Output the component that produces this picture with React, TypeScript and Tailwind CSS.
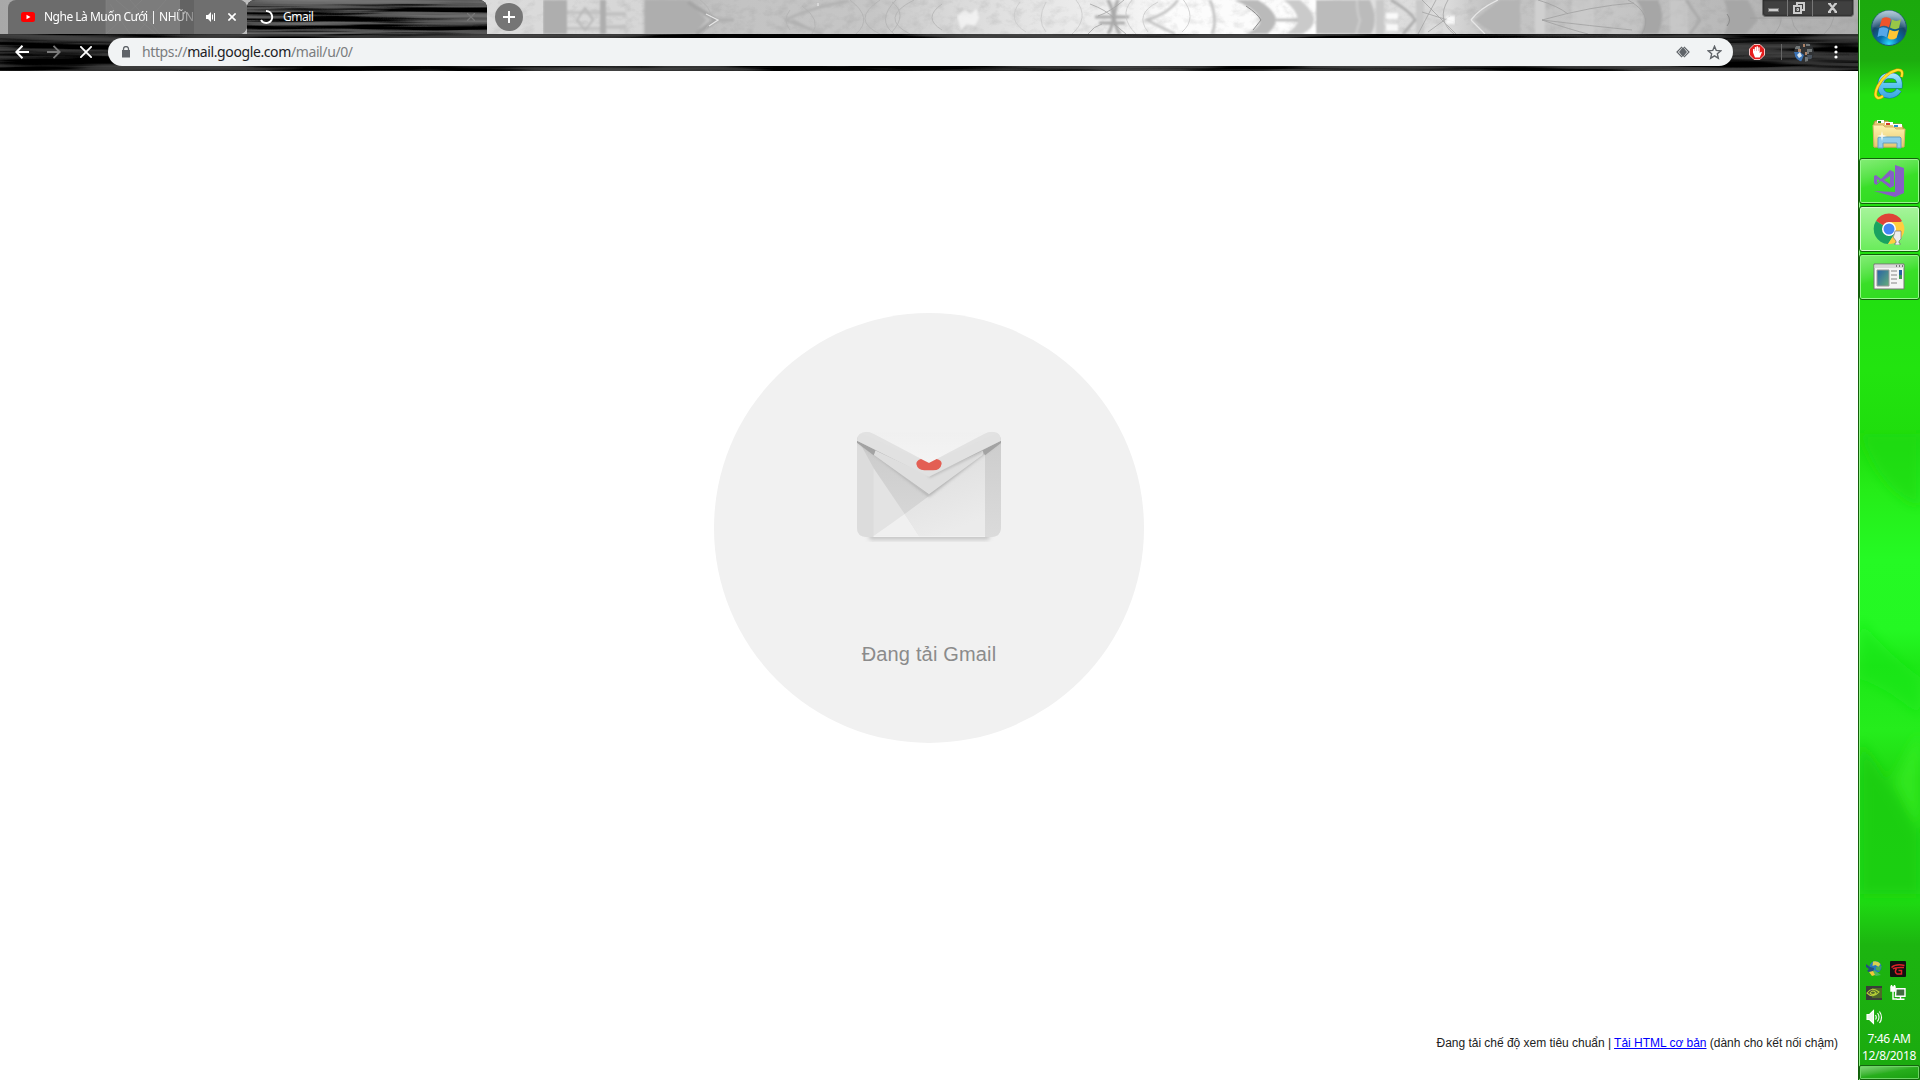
import React from "react";

function Forest() {
  return (
    <svg className="absolute inset-0" width="1858" height="34" viewBox="0 0 1858 34" fill="none">
      <defs>
        <linearGradient id="sky" x1="0" x2="1858" y1="0" y2="0" gradientUnits="userSpaceOnUse">
          <stop offset="0" stopColor="#a8a8a8" />
          <stop offset=".24" stopColor="#d0d0d0" />
          <stop offset=".262" stopColor="#dcdcdc" />
          <stop offset=".345" stopColor="#d6d6d6" />
          <stop offset=".348" stopColor="#bcbcbc" />
          <stop offset=".40" stopColor="#c3c3c3" />
          <stop offset=".47" stopColor="#c6c6c6" />
          <stop offset=".51" stopColor="#d8d8d8" />
          <stop offset=".56" stopColor="#e6e6e6" />
          <stop offset=".61" stopColor="#f2f2f2" />
          <stop offset=".63" stopColor="#fcfcfc" />
          <stop offset=".71" stopColor="#fcfcfc" />
          <stop offset=".74" stopColor="#dedede" />
          <stop offset=".78" stopColor="#dadada" />
          <stop offset=".80" stopColor="#c2c2c2" />
          <stop offset=".87" stopColor="#c6c6c6" />
          <stop offset=".92" stopColor="#bababa" />
          <stop offset="1" stopColor="#adadad" />
        </linearGradient>
        <filter id="grain" x="0" y="0" width="100%" height="100%" colorInterpolationFilters="sRGB">
          <feTurbulence type="fractalNoise" baseFrequency=".09 .12" numOctaves="4" seed="8" />
          <feColorMatrix values="0 0 0 0 .5  0 0 0 0 .5  0 0 0 0 .5  1.6 0 0 0 -.7" />
        </filter>
        <filter id="haze" x="0" y="-20%" width="100%" height="140%"><feGaussianBlur stdDeviation=".8" /></filter>
      </defs>
      <rect width="1858" height="34" fill="url(#sky)" />
      <rect x="487" width="1371" height="34" filter="url(#grain)" opacity=".25" />
      <g filter="url(#haze)">
        <path d="M543 0h24v34h-24zM600 0h6v34h-6zM645 0h43l18 20-12 14h-49z" fill="#aeaeae" />
        <path d="M567 11h33v3h-33zM567 27h33v3h-33zM606 12h20v4h-20zM606 25h20v4h-20z" fill="#c2c2c2" />
        <path d="M1234 0h24q17 10 18 20-1 8-9 14h-20q14-8 13-14-2-10-26-20z" fill="#bababa" />
        <path d="M1284 0h16q14 12 14 20t-12 14h-16q12-8 12-14-1-10-14-20z" fill="#cacaca" />
        <path d="M1316 0h54q9 20 1 34h-55z" fill="#bbbbbb" />
        <path d="M1376 0h8v34h-8zM1416 0h8v34h-8z" fill="#c8c8c8" />
        <path d="M1500 0h20v34h-26l-20-14z" fill="#b4b4b4" />
        <path d="M1535 0h10v34h-10z" fill="#d0d0d0" />
        <path d="M1636 0q14 18 4 34h18q8-18 0-34zM1724 0q8 20 0 34h22l12-14-10-20z" fill="#a6a6a6" />
        <path d="M1572 0h22v34h-22zM1670 0h18v34h-18z" fill="#cdcdcd" opacity=".55" />
        <path d="m577 20 8-12 8 12-8 10z" stroke="#b8b8b8" strokeWidth="2" />
        <path d="m688 2 28 18-20 14" stroke="#a4a4a4" strokeWidth="4" />
        <path d="m716 20 18 0" stroke="#aeaeae" strokeWidth="3" />
        <path d="m785 20q30-14 64-19m-64 19 38 14M792 20l28 14" stroke="#b1b1b1" strokeWidth="2.500" />
        <path d="M1095 17h34m-30 6h26M1108 0q10 18 0 34m10-34q-8 20 2 34" stroke="#a9a9a9" strokeWidth="3" />
        <path d="M1178 0q-10 14-31 20l28 14M1210 0q8 20 2 34" stroke="#c0c0c0" strokeWidth="2.500" />
        <path d="M1276 20h22" stroke="#b8b8b8" strokeWidth="2.500" />
        <path d="M1391 0q20 12 24 20l-12 14M1686 0l14 20-10 14" stroke="#a9a9a9" strokeWidth="2.500" />
        <path d="M1357 0q0 14 3 20l-4 14" stroke="#cecece" strokeWidth="2" />
      </g>
      <g strokeWidth=".8">
        <path d="M700 0q20 14 2 34M790 10q-8 10 0 20m12-24q20 14 10 28M850 0q24 18 6 34m24-34q-30 20 0 34m16-34q-20 20-2 34m20-34q-36 18-4 34m32-30q-20 14 0 26m-50-28q16 12 0 30" stroke="#b3b3b3" />
        <path d="M1020 2q-14 18 6 30m20-30q-10 18 0 30m30-32q14 18-4 34m60-34q-14 16 4 34m22-32q-24 12-10 30m34-34q16 20 0 34" stroke="#c9c9c9" />
        <path d="M1090 4q16 6 24 14m10-18q-14 12-26 16m4 8q-8 2-14 10m26-10 12 10M1422 0l34 34m-20-34-18 34m30-34q-12 20 6 34m-32-22 32 10m-26 10 22-16" stroke="#a4a4a4" />
        <path d="M1542 20q50-14 92-17m-92 17q50 6 90 10m-90-10q30 10 46 14m-50-34q20 6 30 14m60-14q26 14 14 34" stroke="#a0a0a0" />
        <path d="M1770 0q20 16 4 34m24-34q-14 18 2 34m30-34q10 20-6 34m-74-16 80 0" stroke="#a0a0a0" />
      </g>
      <path d="m818 3v3M706 14l12 6-9 6M1471 20q8-11 27-20m-27 20 14 14" stroke="#e6e6e6" strokeWidth="1.300" />
      <g fill="#fff" filter="url(#haze)">
        <path d="m957 16 8-6 6 4 6-6 2 10-4 8-8-2-6 6z" opacity=".6" />
        <path d="M1279 2l9 14h-9zM1279 34v-10h9zM1308 0h7v10zM1308 34h7v-8zM1386 13h12v6h-12zM1386 24h12v7h-12zM1446 16h9v8h-9z" opacity=".85" />
      </g>
      <path d="m1246 6q12 8 15 14l-8 10M1727 14q5 6 0 12" stroke="#8a8a8a" strokeWidth="1" />
    </svg>
  );
}

function Wood({ id, seed }: { id: string; seed: number }) {
  return (
    <svg className="absolute inset-0 h-full w-full">
      <filter id={id} x="0" y="0" width="100%" height="100%" colorInterpolationFilters="sRGB">
        <feTurbulence type="fractalNoise" baseFrequency=".0055 .16" numOctaves="3" seed={seed} />
        <feColorMatrix values="1.500 0 0 0 -.55  1.500 0 0 0 -.55  1.500 0 0 0 -.55  0 0 0 0 1" />
        <feComponentTransfer>
          <feFuncR type="table" tableValues="0 .32 .42 .46 .5" />
          <feFuncG type="table" tableValues="0 .32 .42 .46 .5" />
          <feFuncB type="table" tableValues="0 .32 .42 .46 .5" />
        </feComponentTransfer>
      </filter>
      <rect width="100%" height="100%" filter={`url(#${id})`} />
    </svg>
  );
}

function TabStrip() {
  return (
    <div className="relative h-[34px] w-full overflow-hidden">
      <Forest />
      <div className="relative flex h-full items-start pl-2 text-[12px] text-white">
        <div className="relative flex h-[34px] w-[239px] items-center overflow-hidden rounded-[8px] rounded-bl-none bg-[#6c6c6c]">
          <svg className="absolute inset-0" width="239" height="34" fill="none">
            <path d="M98 0h74v34H98z" fill="#7c7c7c" />
            <path d="M172 0h14v34h-14z" fill="#636363" />
            <path d="M186 0h53v34h-53z" fill="#6f6f6f" />
            <path d="M98 0v34M102 4l20 30m-14-34 40 34m-50 0 36-34m-12 0 30 34m-24 0 30-34" stroke="#858585" opacity=".6" />
          </svg>
          <svg className="relative ml-[13px]" width="14" height="10"><rect width="14" height="10" rx="2.5" fill="#f00" /><path d="m5.500 2.800 4 2.200-4 2.200z" fill="#fff" /></svg>
          <span className="relative ml-[9px] w-[152px] whitespace-nowrap tracking-[-0.5px] [mask-image:linear-gradient(to_right,#000_84%,rgba(0,0,0,.2))]">Nghe Là Muốn Cưới | NHỮN</span>
          <svg className="relative ml-[10px]" width="10" height="10" fill="#fff"><path d="M0 3h2l3-3v10L2 7H0z" /><path d="M6.500 2.500v5M8.500 1v8" stroke="#fff" strokeWidth="1" /></svg>
          <svg className="relative ml-[12px]" width="8" height="8" stroke="#fff" strokeWidth="1.6"><path d="m.4.4 7.2 7.200M7.600.4.4 7.600" /></svg>
        </div>
        <div className="relative flex h-[34px] w-[240px] items-center overflow-hidden rounded-[8px] rounded-b-none bg-black">
          <Wood id="tab-wood" seed={5} />
          <svg className="relative ml-[13px]" width="14" height="16" fill="none" stroke="#fff" strokeWidth="2"><path d="M6 2A6 6 0 1 1 1 11" /></svg>
          <span className="relative ml-[9px] tracking-[-0.5px]">Gmail</span>
          <svg className="absolute right-[12px] top-[13px]" width="8" height="8" stroke="#777" strokeWidth="1.300"><path d="m0 0 8 8M8 0 0 8" /></svg>
        </div>
        <div className="ml-[8px] mt-[3px] flex size-7 items-center justify-center rounded-full bg-[#757575]">
          <svg width="12" height="12" stroke="#fff" strokeWidth="2"><path d="M6 0v12M0 6h12" /></svg>
        </div>
        <div className="ml-auto mr-1 flex h-[17px] w-[92px] rounded-b-[4px] border border-t-0 border-[#6d6d6d] bg-[#404040] shadow-[inset_0_0_2px_#111]">
          <div className="flex w-[25px] items-center justify-center border-r border-[#777]"><svg className="-ml-0.5" width="12" height="16"><rect x=".5" y="8.500" width="10" height="3" fill="#ccc" stroke="#777" /></svg></div>
          <div className="flex w-[25px] items-center justify-center border-r border-[#777]"><svg className="-ml-0.5" width="12" height="14" fill="none" stroke="#ccc" strokeWidth="2"><path d="M4 4V2h7v7H9M1 5h7v7H1z" /><path d="M4 7.500h1.500v2H4z" strokeWidth="1" /></svg></div>
          <div className="flex flex-1 items-center justify-center"><svg width="10" height="10" stroke="#ccc" strokeWidth="2.200"><path d="m1 0 7 9M8 0 1 9M0 .5h3M6.500.5H9M0 9h3m3.500 0H9" /></svg></div>
        </div>
      </div>
    </div>
  );
}

function Toolbar() {
  return (
    <div className="relative h-[37px] w-full overflow-hidden bg-black">
      <Wood id="bar-wood" seed={12} />
      <div className="absolute inset-0 bg-black/40" />
      <div className="relative flex h-9 items-center">
        <svg className="ml-[15px]" width="14" height="14" fill="none" stroke="#fff" strokeWidth="2"><path d="M14 7H1.500M7.500.800 1.300 7l6.200 6.200" /></svg>
        <svg className="ml-[18px]" width="14" height="14" fill="none" stroke="#7a7a7a" strokeWidth="1.800"><path d="M0 7h12.500M6.500.800 12.700 7l-6.200 6.200" /></svg>
        <svg className="ml-[19px]" width="12" height="12" stroke="#fff" strokeWidth="1.800"><path d="m.3.3 11.400 11.400M11.700.3.3 11.700" /></svg>
        <div className="ml-[16px] flex h-7 w-[1625px] items-center rounded-full bg-[#f1f3f4]">
          <svg className="ml-[14px]" width="8" height="12" fill="#5f6368"><path d="M0 4h8v7.500H0z" /><path d="M1.500 5V3a2.500 2.500 0 0 1 5 0v2" fill="none" stroke="#5f6368" strokeWidth="1.300" /></svg>
          <span className="mb-px ml-[12px] whitespace-nowrap text-[14px] tracking-[-0.39px] text-[#7a7c7e]">https://<span className="text-[#202124]">mail.google.com</span>/mail/u/0/</span>
          <svg className="ml-auto" width="14" height="12" fill="none" stroke="#5f6368" strokeWidth="1.200"><path d="M6 .8 1 6l5 5.200M8 .8 13 6l-5 5.200" /><path d="m7 1 4 5-4 5-4-5z" fill="#5f6368" stroke="none" /></svg>
          <svg className="ml-[17px] mr-[11px]" width="15" height="15" viewBox="0 0 15 15" fill="none" stroke="#5f6368" strokeWidth="1.400"><path d="m7.500 1.300 1.750 4.150 4.500.4-3.400 2.950 1 4.400-3.850-2.350-3.850 2.350 1-4.400-3.400-2.950 4.500-.4z" /></svg>
        </div>
        <svg className="ml-[16px]" width="16" height="16" viewBox="0 0 16 16"><path d="M5 .5h6L15.500 5v6L11 15.500H5L.5 11V5z" fill="#e51c1c" stroke="#f7c3c3" /><path d="M4 8.500V5.200q.8-.7 1.500 0V7h.3V3.300q.7-.6 1.400 0V7h.3V2.500q.8-.6 1.500 0V7h.3V3.500q.7-.6 1.400 0V9l1-1q1-.5 1.200.3L10.800 13.500H6z" fill="#fff" /></svg>
        <div className="ml-[16px] h-4 w-px bg-[#656565]" />
        <svg className="ml-[12px]" width="20" height="20" viewBox="0 0 20 20"><defs><clipPath id="face"><circle cx="10" cy="10" r="10" /></clipPath></defs><g clipPath="url(#face)"><path d="M0 0h20v20H0z" fill="#303234" /><path d="M1 4h5v3H1zM13 7h5v3h-3v2h-2zM11 15h3v5h-3zM12 2h4v2h-4z" fill="#727778" /><path d="M0 10h6l4 3-3 7H2z" fill="#3d73b4" /><path d="M4 7h3v3H4zM9 2h2v3H9zM11 10h2v3h-2z" fill="#ad8368" /><path d="m3 13 3-3 2 4-3 2z" fill="#dce8ee" /><path d="M13 13h5v4h-4z" fill="#4b545f" /></g></svg>
        <svg className="ml-[20px]" width="4" height="14" fill="#fff"><circle cx="2" cy="2" r="1.600" /><circle cx="2" cy="7" r="1.600" /><circle cx="2" cy="12" r="1.600" /></svg>
      </div>
    </div>
  );
}

function Envelope() {
  return (
    <svg className="ml-px shrink-0" width="180" height="150" viewBox="0 0 540 450">
      <defs>
        <linearGradient id="left-fold" x2="0" y2="1"><stop stopColor="#cbcbcb" /><stop offset="1" stopColor="#d6d6d6" /></linearGradient>
        <linearGradient id="front" x1="0" y1="0" x2=".4" y2="1"><stop stopColor="#dcdcdc" /><stop offset="1" stopColor="#ebebeb" /></linearGradient>
        <linearGradient id="side" x2="0" y2="1"><stop stopColor="#cdcdcd" /><stop offset="1" stopColor="#dbdbdb" /></linearGradient>
        <linearGradient id="inner" x2="0" y2="1"><stop stopColor="#f0f0f0" /><stop offset="1" stopColor="#f4f4f4" /></linearGradient>
        <filter id="drop"><feGaussianBlur stdDeviation="7" /></filter>
        <filter id="edge"><feGaussianBlur stdDeviation="4" /></filter>
        <clipPath id="shell"><path d="M51 92Q52 66 80 65q8 0 22 7l165 87 165-87q14-8 27-7 23 2 24 27v262q-2 26-28 27H79q-27-1-28-27z" /></clipPath>
      </defs>
      <path d="M73 340h390l-18 50H90z" fill="#aaa" opacity=".6" filter="url(#drop)" />
      <path d="M95 67h345L267 160z" fill="url(#inner)" />
      <g clipPath="url(#shell)">
        <path d="M51 65h432v316H51z" fill="#e2e2e2" />
        <path d="M51 92l50 44v245H51z" fill="#dcdcdc" />
        <path d="M101 130v251l93-68z" fill="#e3e3e3" />
        <path d="m101 378 93-66 45 69H101z" fill="#f0f0f0" />
        <path d="m194 312 73-54 168-122v245H239z" fill="url(#front)" />
        <path d="m60 100 41 75 93 137 73-54z" fill="url(#left-fold)" />
        <path d="m435 132 48-38v287h-48z" fill="url(#side)" />
        <path d="M51 94l216 166L483 94v-15L267 193 51 79z" fill="#999" filter="url(#edge)" opacity=".65" />
        <path d="m105 121 162 76 164-76-3 14-161 118-165-118z" fill="#dedede" />
        <path d="M267 200l160-78" stroke="#aaa" strokeWidth="6" fill="none" filter="url(#edge)" />
        <path d="m51 92 56 28-6 16-50-38zM483 92l-56 29 8 15 48-37z" fill="#a3a3a3" />
        <path d="M51 65v27l216 108L483 92V65L267 159z" fill="#e1e1e1" />
        <path d="M101 379h334" stroke="#f5f5f5" strokeWidth="2" />
      </g>
      <path d="m243 147 24 12 23-12q15 3 15 14-3 19-26 20h-26q-21-2-24-19 0-11 14-15z" fill="#e35f54" />
    </svg>
  );
}

function PageContent() {
  return (
    <main className="flex flex-1 flex-col items-center bg-white" style={{ fontFamily: '"Liberation Sans", Arial, sans-serif' }}>
      <div className="mt-[242px] flex size-[430px] shrink-0 flex-col items-center rounded-full bg-[#f1f1f1] pt-[97px]">
        <Envelope />
        <p className="mt-[79px] whitespace-nowrap text-[20px] leading-[30px] tracking-[0.17px] text-[#8b8b8b]">Đang tải Gmail</p>
      </div>
      <p className="mb-[28px] mr-[20px] mt-auto self-end whitespace-nowrap text-[12px] leading-[18px] tracking-[-0.025px] text-[#222]">
        Đang tải chế độ xem tiêu chuẩn | <a className="text-[#00f] underline">Tải HTML cơ bản</a> (dành cho kết nối chậm)
      </p>
    </main>
  );
}

function StartOrb() {
  return (
    <svg className="mt-[9px] shrink-0" width="38" height="38" viewBox="0 0 38 38">
      <defs><radialGradient id="orb" cx=".5" cy=".95" r=".8"><stop stopColor="#30d8ff" /><stop offset=".35" stopColor="#056fae" /><stop offset=".75" stopColor="#174565" /><stop offset="1" stopColor="#6a96ae" /></radialGradient><linearGradient id="gloss" x2="0" y2="1"><stop stopColor="#d3e0ea" /><stop offset="1" stopColor="#44708f" stopOpacity=".4" /></linearGradient></defs>
      <circle cx="19" cy="19" r="17.500" fill="url(#orb)" stroke="#205b70" />
      <path d="M2.500 18A16.500 16.500 0 0 1 35.500 18Q22 22 2.500 18z" fill="url(#gloss)" opacity=".75" />
      <path d="M12 9.500q5-2.500 9 .5l-2 8.500q-4-3-9.500-.5z" fill="#ed542b" /><path d="M22 10.500q5 3 9-.5l-2 9q-4 2.500-9-.5z" fill="#98c747" /><path d="M9 19.500q5-2.500 9.500.5l-2 8.500q-4-3-9-.5z" fill="#55a7e9" /><path d="M19.500 20.500q5 3 9.500.5l-2.500 8q-5 3-9 0z" fill="#ffc534" />
    </svg>
  );
}

function ExplorerE() {
  return (
    <svg className="mt-[21px] shrink-0" width="30" height="32" viewBox="0 0 30 32" fill="none">
      <defs><linearGradient id="ie" gradientUnits="userSpaceOnUse" x1="0" y1="4" x2="0" y2="30"><stop stopColor="#b4efff" /><stop offset=".5" stopColor="#5cc3f2" /><stop offset="1" stopColor="#3aa6e0" /></linearGradient></defs>
      <path d="M25 22Q21.500 27.500 15.500 27.500 6.500 27 6.500 17.500T16 7.500Q26 7.500 25.500 17.500H8" stroke="#1172a9" strokeWidth="6" />
      <path d="M25 22Q21.500 27.500 15.500 27.500 6.500 27 6.500 17.500T16 7.500Q26 7.500 25.500 17.500H8" stroke="url(#ie)" strokeWidth="4.800" />
      <path d="M27.500 9Q30 1 23 2 11 5 4 18-1 28 4 30q2 .5 5-2" stroke="#d79a00" strokeWidth="3" /><path d="M27.500 9Q30 1 23 2 11 5 4 18-1 28 4 30q2 .5 5-2" stroke="#ffe12b" strokeWidth="1.900" />
    </svg>
  );
}

function Folder() {
  return (
    <svg className="mt-[19px] shrink-0" width="34" height="32" viewBox="0 0 34 32">
      <defs><linearGradient id="folder" x2="0" y2="1"><stop stopColor="#fff3b2" /><stop offset="1" stopColor="#e7c76e" /></linearGradient></defs>
      <path d="M3 2h13l2 3h11l2 3v20H2V4z" fill="#e6c774" stroke="#ad8c43" />
      <path d="M5 1h7v3H5zM13 3h8v3h-8zM21 5h9v3h-9z" fill="#fff" /><path d="M6 2h3v2H6z" fill="#178b21" /><path d="M14 4h4v2h-4z" fill="#d33d29" /><path d="M22 6h4v2h-4z" fill="#258bd2" />
      <path d="M1 6h10l2 2h9l2 2h9l-1 18H2z" fill="url(#folder)" stroke="#d5b267" />
      <path d="M6 29V19q0-1 2-1h20l1 1v10h-4v-5H11v5z" fill="#91ccec" stroke="#649fbe" />
      <path d="m10 12 1 4 4 1-4 1-1 4-1-4-4-1 4-1z" fill="#fff" opacity=".8" />
    </svg>
  );
}

function TaskButton({ active, children }: { active?: boolean; children: React.ReactNode }) {
  return (
    <div className={active ? "flex h-[46px] w-[61px] items-center justify-center rounded-[3px] border border-[#14600c] bg-linear-to-b from-[#a6f49b] to-[#68ec59] pr-0.5 shadow-[inset_0_0_0_1px_#d6ffd0]" : "flex h-[46px] w-[61px] items-center justify-center rounded-[3px] border border-[#14600c] bg-linear-165 from-[#83ed75] via-[#39df28] to-[#2bda1c] pr-0.5 shadow-[inset_0_0_0_1px_#98f98e]"}>
      {children}
    </div>
  );
}

function Tray() {
  return (
    <div className="relative mt-auto flex w-full flex-col items-center">
      <div className="grid grid-cols-[16px_16px] gap-2 self-start pl-[7px]">
        <svg width="16" height="16"><circle cx="9.500" cy="6" r="6" fill="#2679bb" /><path d="M7 .5q5-1 7.500 2.500l-2 3-3-2-3 1z" fill="#d9d24d" /><path d="m10 6 5.500-1-2 5-3.500-1z" fill="#45a75a" /><path d="m0 3 4 3 4 1-1 6-6-3 2-2-3-2z" fill="#234f80" /><path d="m8 9 7 5-5 1-4-3z" fill="#49b95d" /><path d="m3 11 4-1 2 4-3 1z" fill="#f0c937" /></svg>
        <svg width="16" height="16"><rect width="16" height="16" rx="1" fill="#111" /><path d="M1.500 6.500Q6 2.500 14.500 4.500M3 8q2-2 11-1.500M6.500 7.500Q4 11 7 13h4.500V9.500H8.500" fill="none" stroke="#df2027" strokeWidth="1.500" /></svg>
        <svg width="16" height="16" fill="none"><path d="M0 1h16v14H0z" fill="#393e39" /><path d="M6 3h10v10H6z" fill="#4d6a28" /><path d="M1 8q5-7 12-1-6 7-12 1zm3 0q3-4 6 0-3 3-6 0z" stroke="#b8d038" strokeWidth="1.100" /></svg>
        <svg width="16" height="16" fill="none" stroke="#fff" strokeWidth="1.400"><path d="M6 3.700h9v7.500H5.500z" fill="#3f6b3e" /><path d="M10.500 11v3m-4 .3h8M3 6v8h4" /><path d="M1 2h4v4H1z" fill="#fff" /><path d="M1.500 0v3m3-3v3" /></svg>
        <svg width="17" height="16" fill="none" stroke="#fff" strokeWidth="1.100"><path d="M1 5.500h2.500l4-4v13l-4-4H1z" fill="#eaf6e8" /><path d="M9.500 6q1.500 2.500 0 4.500m2-6.500q3 4 0 8.500m2-10q4 6 0 11.500" /></svg>
      </div>
      <div className="mt-[5px] whitespace-nowrap pr-px text-center text-[12px] leading-[17px] tracking-[-0.35px] text-white">
        <div>7:46 AM</div>
        <div>12/8/2018</div>
      </div>
      <div className="mt-px h-[15px] w-[61px] rounded-[2px] border border-[#14650f] bg-linear-170 from-[#83d87b] via-[#27ae1c] to-[#169d0d] shadow-[inset_0_0_0_1px_#6dd565]" />
    </div>
  );
}

function Taskbar() {
  return (
    <aside className="relative flex h-full w-[62px] shrink-0 flex-col items-center overflow-hidden border-l border-[#126009] bg-[linear-gradient(to_bottom,#1ba90d_0,#1cad0e_60px,#21dc10_95px,#22e011_300px,#22e40f_370px,#1fdd0d_440px,#25ed18_490px,#25fa24_560px,#24f823_630px,#1de817_665px,#25ed1c_730px,#1fd811_780px,#1edb12_900px,#1cb510_945px,#1ba90f_1080px)] shadow-[inset_1px_0_0_#93f78b]">
      <svg className="absolute left-px top-[430px]" width="60" height="390" viewBox="0 0 61 390"><defs><filter id="soft"><feGaussianBlur stdDeviation="6" /></filter></defs><g filter="url(#soft)"><path d="M0 0q20 60 61 75V0z" fill="#20d80d" opacity=".65" /><path d="M0 190q28 35 61 58v40Q30 260 0 250z" fill="#12e31b" opacity=".5" /></g></svg>
      <svg className="absolute left-px top-[700px]" width="60" height="260" viewBox="0 0 61 260"><g filter="url(#soft)"><path d="M0 40q30 40 61 95v60H0z" fill="#1bcb0c" opacity=".75" /><path d="M61 30v100Q45 100 34 80z" fill="#40f52b" opacity=".5" /></g></svg>
      <div className="relative flex flex-col items-center">
        <div className="flex flex-col items-center pr-0.5">
          <StartOrb />
          <ExplorerE />
          <Folder />
        </div>
        <div className="mt-[7px] flex flex-col gap-[2px]">
          <TaskButton><svg width="32" height="32" viewBox="0 0 32 32"><path d="m22 0 9 3v25l-9 4-21-6 21 1z" fill="#865fc5" /><path d="m3 10 5 4 9-9 4 2v14l-4 2-9-7-5 4-2-2V11zm1 4v4l3-2zm13-3-6 4 6 4z" fill="#865fc5" fillRule="evenodd" /></svg></TaskButton>
          <TaskButton active><svg width="32" height="32" viewBox="0 0 32 32"><path d="M16 16 3 8A15 15 0 0 1 29 8z" fill="#de4437" /><path d="M16 16 3 8A15 15 0 0 0 15 31l7-11z" fill="#1aa260" /><path d="M16 9h13.500A15 15 0 0 1 15 31l7-11z" fill="#ffcd40" /><circle cx="16" cy="16" r="7" fill="#fff" /><circle cx="16" cy="16" r="5.500" fill="#4285f4" /><path d="M22 18h6v8l-2 2v2h1v2h-5v-2h1v-2l-3-4 1-2z" fill="#eee" stroke="#777" strokeWidth=".7" /></svg></TaskButton>
          <TaskButton><svg width="32" height="28" viewBox="0 0 32 28"><defs><linearGradient id="pane" x2="1" y2="1"><stop stopColor="#2661a6" /><stop offset="1" stopColor="#66ae7b" /></linearGradient></defs><path d="M1 1h30v25H1z" fill="#f5f5f5" stroke="#777" /><path d="M1.500 2h29v3h-29z" fill="#d9d9d9" /><path d="M23 3h1m2 0h1m2 0h1" stroke="#555" strokeWidth="1.500" /><path d="M4 7h12v16H4z" fill="url(#pane)" stroke="#999" /><path d="M18 8h6m-6 4h6m-6 4h6m-6 4h6" stroke="#aaa" strokeWidth="1.500" /><path d="M26 7h3v9h-3z" fill="#27619f" /><path d="M26 12h3v4h-3z" fill="#3f9957" /></svg></TaskButton>
        </div>
      </div>
      <Tray />
    </aside>
  );
}

export default function App() {
  return (
    <div className="flex h-[1080px] w-[1920px] overflow-hidden bg-white" style={{ fontFamily: '"Noto Sans", "Open Sans", sans-serif' }}>
      <div className="flex w-[1858px] shrink-0 flex-col">
        <TabStrip />
        <Toolbar />
        <PageContent />
      </div>
      <Taskbar />
    </div>
  );
}
